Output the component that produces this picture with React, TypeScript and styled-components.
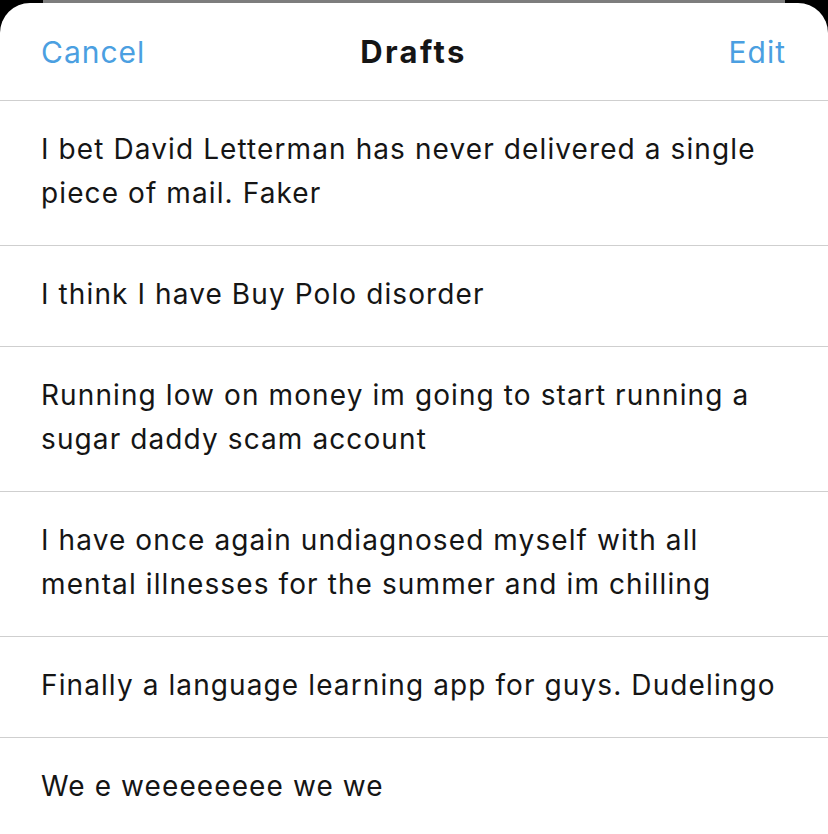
import React from 'react'
import styled, { createGlobalStyle } from 'styled-components'

const GlobalStyle = createGlobalStyle`
    html, body {
        margin: 0;
        padding: 0;
        background: #000;
    }
    body {
        font-family: Inter, 'Noto Sans', sans-serif;
        -webkit-font-smoothing: antialiased;
    }
`

const Page = styled.div`
    width: 828px;
    height: 834px;
    overflow: hidden;
    background: #000;
`

const BackCard = styled.div`
    height: 3px;
    margin: 0 43px;
    background: #7d7d7d;
`

const Sheet = styled.div`
    background: #fff;
    border-radius: 30px 30px 0 0;
    min-height: 831px;
`

const Header = styled.div`
    height: 97px;
    padding: 0 42px 0 41px;
    display: grid;
    grid-template-columns: 1fr auto 1fr;
    align-items: center;
    border-bottom: 1px solid #cfcfcf;
`

const NavButton = styled.button<{ $align: 'left' | 'right' }>`
    background: none;
    border: none;
    padding: 0;
    font-family: inherit;
    font-size: 30px;
    font-weight: 400;
    letter-spacing: 1px;
    color: #4b9fe1;
    justify-self: ${(p) => (p.$align === 'left' ? 'start' : 'end')};
    cursor: pointer;
`

const Title = styled.h1`
    margin: 0;
    font-size: 31px;
    font-weight: 700;
    letter-spacing: 2.4px;
    color: #151515;
`

const List = styled.ul`
    list-style: none;
    margin: 0;
    padding: 0;
`

const Row = styled.li`
    padding: 26px 41px 30px;
    border-bottom: 1px solid #cfcfcf;
    font-size: 28px;
    line-height: 44px;
    letter-spacing: 1.1px;
    color: #151515;
`

const drafts = [
    'I bet David Letterman has never delivered a single piece of mail. Faker',
    'I think I have Buy Polo disorder',
    'Running low on money im going to start running a sugar daddy scam account',
    'I have once again undiagnosed myself with all mental illnesses for the summer and im chilling',
    'Finally a language learning app for guys. Dudelingo',
    'We e weeeeeeee we we',
]

const App = () => {
    return (
        <Page>
            <GlobalStyle />
            <BackCard />
            <Sheet>
                <Header>
                    <NavButton $align='left'>Cancel</NavButton>
                    <Title>Drafts</Title>
                    <NavButton $align='right'>Edit</NavButton>
                </Header>
                <List>
                    {drafts.map((text) => (
                        <Row key={text}>{text}</Row>
                    ))}
                </List>
            </Sheet>
        </Page>
    )
}

export default App
